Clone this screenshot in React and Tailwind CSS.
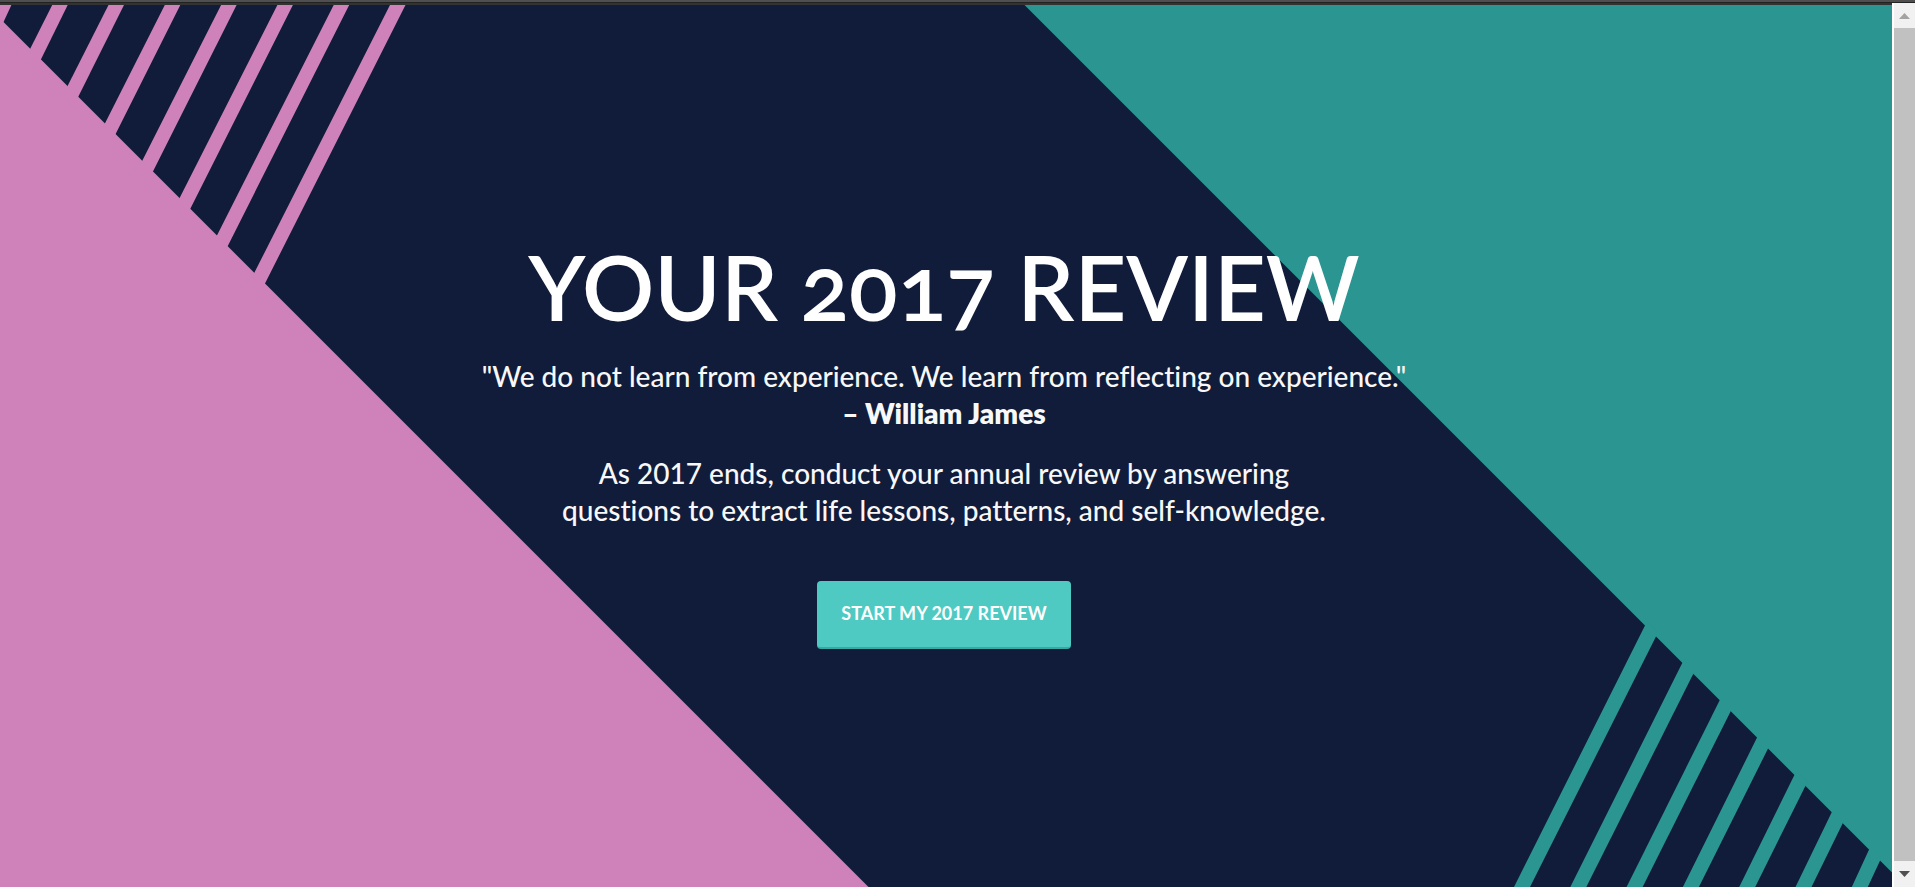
const STRIPES = [0, 1, 2, 3, 4, 5, 6, 7];
const STEP = 37.35;
const TOP_STEP = 56.3;

function Backdrop() {
  return (
    <svg
      className="absolute inset-0 h-full w-full"
      viewBox="0 0 1892 882"
      preserveAspectRatio="xMidYMid slice"
      aria-hidden="true"
    >
      <rect width="1892" height="882" fill="#111c3a" />
      <polygon points="0,13.5 868.5,882 0,882" fill="#ce82b9" />
      <polygon points="1024.5,0 1892,0 1892,867.5" fill="#2a9591" />
      {STRIPES.map((k) => {
        const d = k * STEP;
        const t = k * TOP_STEP;
        return (
          <g key={k}>
            <polygon
              fill="#ce82b9"
              points={`${390 - t},0 ${405.5 - t},0 ${265 - d},${278.5 - d} ${263 - d},${282.5 - d} ${252.3 - d},${271.8 - d} ${254.3 - d},${267.8 - d}`}
            />
            <polygon
              fill="#2a9591"
              points={`${1645 + d},${620.5 + d} ${1647 + d},${616.5 + d} ${1658 + d},${627.5 + d} ${1656 + d},${631.5 + d} ${1530 + t},882 ${1514 + t},882`}
            />
          </g>
        );
      })}
    </svg>
  );
}

function ScrollRail() {
  return (
    <div className="-mt-0.5 flex w-[23px] shrink-0 flex-col border-l-2 border-white bg-[#f1f1f1]" aria-hidden="true">
      <div className="flex h-[25px] items-center justify-center">
        <svg width="11" height="6" viewBox="0 0 11 6">
          <path d="M5.5 0L11 6H0z" fill="#a3a3a3" />
        </svg>
      </div>
      <div className="grow bg-[#c1c1c1]" />
      <div className="flex h-[26px] items-center justify-center">
        <svg width="11" height="6" viewBox="0 0 11 6">
          <path d="M0 0H11L5.5 6z" fill="#505050" />
        </svg>
      </div>
    </div>
  );
}

export default function App() {
  return (
    <div className="flex min-h-screen flex-col bg-[#111c3a] font-['Lato',sans-serif]">
      <div className="h-[5px] shrink-0 border-b-2 border-[#333333] bg-[#4f4f4f] pt-0.5">
        <div className="h-px bg-[#222222]" />
      </div>
      <div className="flex grow">
        <main className="relative flex grow flex-col items-center justify-center overflow-hidden pr-5 pb-3 pl-4 text-center text-white">
          <Backdrop />
          <div className="relative flex flex-col items-center">
            <h1 className="text-[90px] leading-[108px] font-semibold [font-feature-settings:'onum']">YOUR 2017 REVIEW</h1>
            <p className="mt-[18px] text-[28px] leading-[37px] font-medium text-[#f8f8f8] [font-variant-ligatures:no-common-ligatures]">
              "We do not learn from experience. We learn from reflecting on experience."
              <br />
              <strong className="font-extrabold">– William James</strong>
            </p>
            <p className="mt-[23px] text-[28px] leading-[37px] font-medium text-[#f8f8f8] [font-variant-ligatures:no-common-ligatures]">
              As 2017 ends, conduct your annual review by answering
              <br />
              questions to extract life lessons, patterns, and self-knowledge.
            </p>
            <button
              type="button"
              className="mt-13 h-[68px] cursor-pointer rounded border-b-2 border-[#36aaa3] bg-[#4ecac2] px-6 text-[18px] font-bold text-white"
            >
              START MY 2017 REVIEW
            </button>
          </div>
        </main>
        <ScrollRail />
      </div>
    </div>
  );
}
